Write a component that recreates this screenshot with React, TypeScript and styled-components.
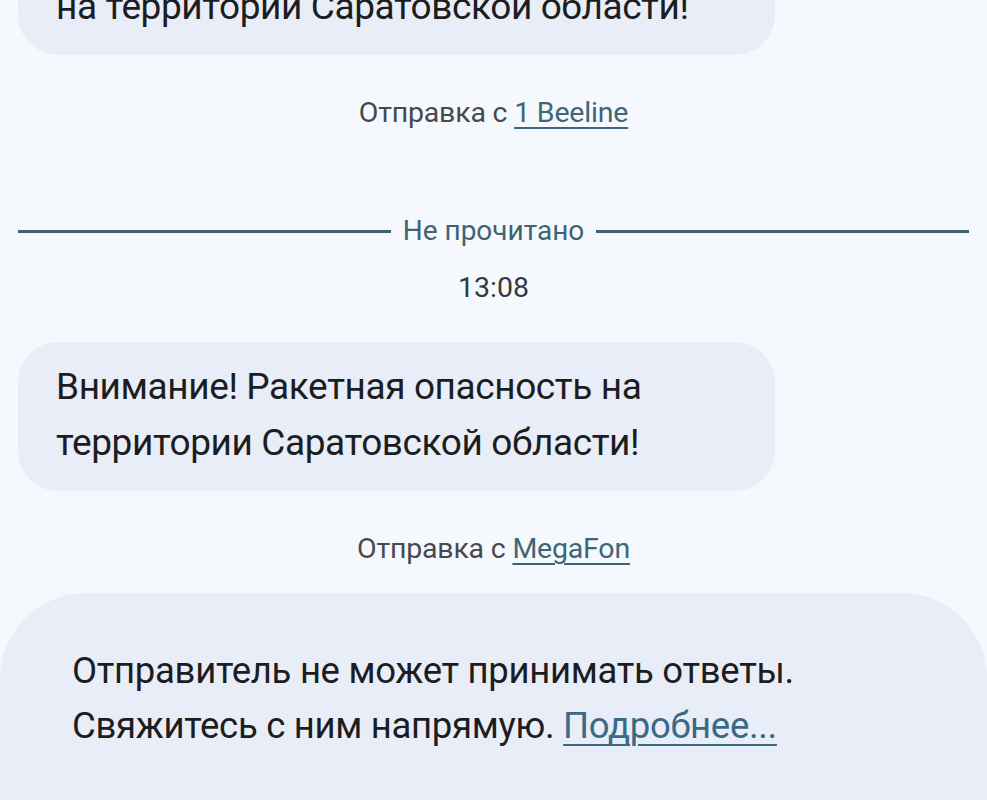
import styled, { createGlobalStyle } from 'styled-components';

const GlobalStyle = createGlobalStyle`
  html, body {
    margin: 0;
    padding: 0;
    background: #f5f9fd;
    overflow: hidden;
  }
  body {
    font-family: Roboto, 'Noto Sans', sans-serif;
  }
`;

const Screen = styled.div`
  width: 987px;
  height: 800px;
  overflow: hidden;
  background: #f5f9fd;
`;

// the thread is scrolled, so the first bubble sits partly above the top edge
const Feed = styled.div`
  display: flex;
  flex-direction: column;
  margin-top: -94px;
`;

const Bubble = styled.div`
  align-self: flex-start;
  margin-left: 18px;
  width: 757px;
  box-sizing: border-box;
  padding: 17px 38px 20px;
  background: #e9edf7;
  border-radius: 40px;
  color: #1c1d20;
  font-size: 37px;
  line-height: 56px;
  letter-spacing: -0.4px;
`;

const Sender = styled.div`
  text-align: center;
  margin-top: 39px;
  color: #46494d;
  font-size: 28.5px;
  line-height: 38px;
  letter-spacing: -0.2px;
`;

const SimLink = styled.a`
  color: #3e6678;
  text-decoration: underline;
  text-decoration-thickness: 2px;
  text-underline-offset: 5px;
`;

const Divider = styled.div`
  display: flex;
  align-items: center;
  gap: 12px;
  margin: 80px 18px 0;
  color: #3e6472;
  font-size: 28px;
  line-height: 38px;

  &::before,
  &::after {
    content: '';
    flex: 1;
    height: 3px;
    background: #41616f;
  }
`;

const Time = styled.div`
  text-align: center;
  margin-top: 19px;
  color: #35383c;
  font-size: 28.5px;
  line-height: 38px;
`;

const TimeSpacer = styled.div`
  height: 35px;
`;

const InfoCard = styled.div`
  margin-top: 25px;
  padding: 50px 72px 60px;
  background: #e9edf7;
  border-radius: 86px 86px 0 0;
  color: #1c1d20;
  font-size: 36.5px;
  line-height: 55px;
  letter-spacing: -0.3px;
`;

const MoreLink = styled.a`
  color: #3a6a86;
  text-decoration: underline;
  text-decoration-thickness: 2px;
  text-underline-offset: 6px;
`;

export default function App() {
  return (
    <Screen>
      <GlobalStyle />
      <Feed>
        <Bubble>
          Внимание! Ракетная опасность
          <br />
          на территории Саратовской области!
        </Bubble>
        <Sender>
          Отправка с <SimLink>1 Beeline</SimLink>
        </Sender>
        <Divider>Не прочитано</Divider>
        <Time>13:08</Time>
        <TimeSpacer />
        <Bubble>
          Внимание! Ракетная опасность на
          <br />
          территории Саратовской области!
        </Bubble>
        <Sender>
          Отправка с <SimLink>MegaFon</SimLink>
        </Sender>
        <InfoCard>
          Отправитель не может принимать ответы.
          <br />
          Свяжитесь с ним напрямую. <MoreLink>Подробнее...</MoreLink>
        </InfoCard>
      </Feed>
    </Screen>
  );
}
